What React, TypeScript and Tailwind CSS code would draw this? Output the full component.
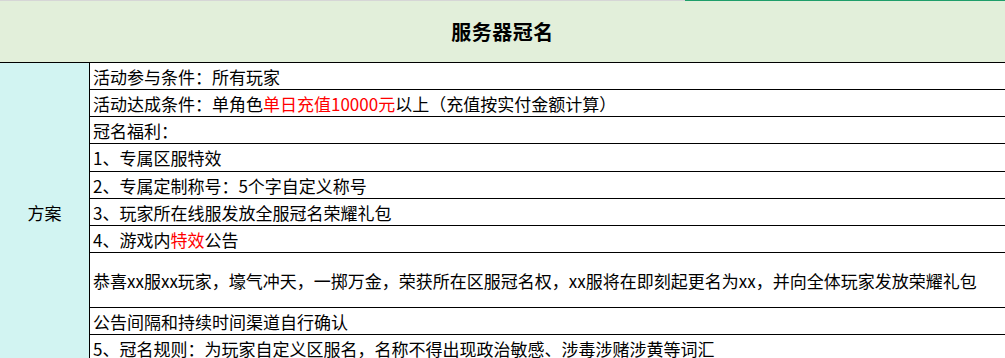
const rows: { h: string; content: React.ReactNode }[] = [
  { h: 'h-[27px]', content: '活动参与条件：所有玩家' },
  {
    h: 'h-[27px]',
    content: (
      <>
        活动达成条件：单角色<span className="text-[#ff0000]">单日充值10000元</span>以上（充值按实付金额计算）
      </>
    ),
  },
  { h: 'h-[27px]', content: '冠名福利：' },
  { h: 'h-[28px]', content: '1、专属区服特效' },
  { h: 'h-[27px]', content: '2、专属定制称号：5个字自定义称号' },
  { h: 'h-[27px]', content: '3、玩家所在线服发放全服冠名荣耀礼包' },
  {
    h: 'h-[27px]',
    content: (
      <>
        4、游戏内<span className="text-[#ff0000]">特效</span>公告
      </>
    ),
  },
  {
    h: 'h-[55px]',
    content:
      '恭喜xx服xx玩家，壕气冲天，一掷万金，荣获所在区服冠名权，xx服将在即刻起更名为xx，并向全体玩家发放荣耀礼包',
  },
  { h: 'h-[27px]', content: '公告间隔和持续时间渠道自行确认' },
  { h: 'h-[27px]', content: '5、冠名规则：为玩家自定义区服名，名称不得出现政治敏感、涉毒涉赌涉黄等词汇' },
];

export default function App() {
  return (
    <div
      className="w-[1005px] h-[358px] overflow-hidden bg-white text-black"
      style={{ fontFamily: '"Noto Sans CJK SC", "Noto Sans", sans-serif' }}
    >
      {/* selection edge */}
      <div className="flex h-px">
        <div className="w-[685px] bg-[#d6d6d6]" />
        <div className="flex-1 bg-[#1f9e6a]" />
      </div>

      {/* title */}
      <div className="h-[62px] bg-[#e2efda] border-b border-black flex items-center justify-center">
        <span className="text-[20px] font-bold leading-none tracking-[0.5px]">服务器冠名</span>
      </div>

      <div className="flex">
        <div className="w-[90px] shrink-0 bg-[#d2f4f2] border-r border-black flex items-center justify-center text-[17px]">
          方案
        </div>
        <div className="flex-1">
          {rows.map((r, i) => (
            <div
              key={i}
              className={`${r.h} border-b border-black flex items-center pl-[3px] text-[17px] leading-none whitespace-nowrap`}
            >
              {r.content}
            </div>
          ))}
        </div>
      </div>
    </div>
  );
}
